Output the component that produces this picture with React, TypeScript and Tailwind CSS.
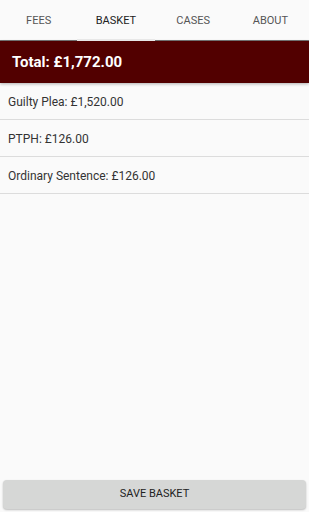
const tabs = ["FEES", "BASKET", "CASES", "ABOUT"];

const items = [
  { name: "Guilty Plea", fee: "£1,520.00" },
  { name: "PTPH", fee: "£126.00" },
  { name: "Ordinary Sentence", fee: "£126.00" },
];

export default function App() {
  return (
    <div className="flex h-[512px] w-[309px] flex-col bg-[#fafafa] font-['Roboto',sans-serif]">
      <nav className="grid h-[41px] grid-cols-4 border-b border-[#777]">
        {tabs.map((tab) => (
          <div
            key={tab}
            className={`relative flex items-center justify-center pt-[2px] text-[11px] ${
              tab === "BASKET" ? "text-[#222]" : "text-[#555]"
            }`}
          >
            {tab}
            {tab === "BASKET" && <span className="absolute inset-x-0 -bottom-px h-[2px] bg-[#e8e8e8]" />}
          </div>
        ))}
      </nav>

      <header className="flex h-[42px] items-center bg-[#520000] px-3 shadow-[0_1px_3px_rgba(0,0,0,0.3)]">
        <h1 className="text-[15px] font-bold text-white">Total: £1,772.00</h1>
      </header>

      <ul className="flex-1">
        {items.map((item) => (
          <li key={item.name} className="flex h-[37px] items-center border-b border-[#dcdcdc] px-2 pt-[2px] text-[12px] text-[#333]">
            {item.name}: {item.fee}
          </li>
        ))}
      </ul>

      <div className="px-[3px] pb-[3px]">
        <button className="h-[29px] w-full rounded-sm bg-[#d6d7d6] text-[11px] text-[#222] shadow-[0_1px_2px_rgba(0,0,0,0.25)]">
          SAVE BASKET
        </button>
      </div>
    </div>
  );
}
